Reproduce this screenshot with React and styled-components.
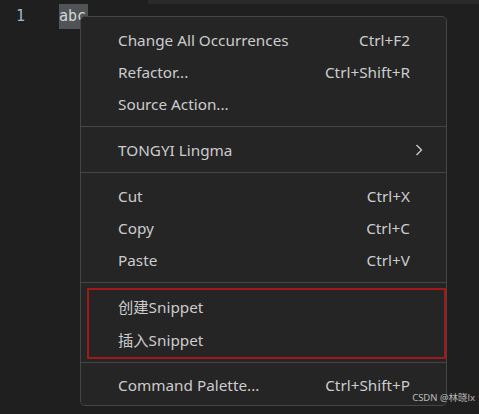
import styled, { createGlobalStyle } from "styled-components";

const Global = createGlobalStyle`
    html, body {
        margin: 0;
        background: #1f1f1f;
        height: 100%;
        overflow: hidden;
    }
    #root {
        height: 100%;
    }
`;

const Editor = styled.div`
    position: relative;
    height: 414px;
    width: 479px;
    background: #1f1f1f;
    font-family: "Noto Sans", "Noto Sans CJK SC", sans-serif;
`;

const TopStrip = styled.div`
    margin-left: 148px;
    height: 4px;
    background: #2a2a2a;
`;

const CodeLine = styled.div`
    display: flex;
    align-items: center;
    height: 24px;
    font-family: "DejaVu Sans Mono", monospace;
    font-size: 15px;
`;

const LineNumber = styled.span`
    width: 59px;
    padding-left: 16px;
    box-sizing: border-box;
    color: #a8b4c4;
`;

const Selected = styled.span`
    background: #515457;
    color: #d4d4d4;
    padding: 3px 0 4px;
    width: 29px;
    overflow: hidden;
`;

const Menu = styled.div`
    position: absolute;
    left: 80px;
    top: 16px;
    width: 367px;
    height: 390px;
    box-sizing: border-box;
    background: #252526;
    border: 1px solid #454545;
    border-radius: 5px;
    padding: 7px 0 3px;
    display: flex;
    flex-direction: column;
    font-size: 15.3px;
    color: #cccccc;
`;

const Item = styled.div`
    display: flex;
    align-items: center;
    justify-content: space-between;
    height: ${(p) => p.$h || 32}px;
    padding: 0 36px 0 37px;
`;

const Key = styled.span`
    color: #cccccc;
`;

const Chevron = styled.svg`
    margin-right: -13px;
`;

const Separator = styled.div`
    height: 1px;
    background: #454545;
    margin: ${(p) => p.$m || "6px 0 7px"};
`;

const Highlight = styled.div`
    position: absolute;
    left: 6px;
    top: 271px;
    width: 359px;
    height: 71px;
    box-sizing: border-box;
    border: 2px solid #a11a1a;
    border-radius: 1px;
`;

const Watermark = styled.div`
    position: absolute;
    right: 4px;
    bottom: 10px;
    font-family: "Noto Sans", "Noto Sans CJK SC", sans-serif;
    font-size: 9.5px;
    color: rgba(235, 235, 235, 0.75);
`;

const App = () => {
    return (
        <Editor>
            <Global />
            <TopStrip />
            <CodeLine>
                <LineNumber>1</LineNumber>
                <Selected>abc</Selected>
            </CodeLine>
            <Menu>
                <Item>
                    <span>Change All Occurrences</span>
                    <Key>Ctrl+F2</Key>
                </Item>
                <Item>
                    <span>Refactor...</span>
                    <Key>Ctrl+Shift+R</Key>
                </Item>
                <Item>
                    <span>Source Action...</span>
                </Item>
                <Separator />
                <Item>
                    <span>TONGYI Lingma</span>
                    <Chevron width="8" height="12" viewBox="0 0 8 12">
                        <path d="M1.5 1 L6.5 6 L1.5 11" fill="none" stroke="#c8c8c8" strokeWidth="1.4" />
                    </Chevron>
                </Item>
                <Separator />
                <Item>
                    <span>Cut</span>
                    <Key>Ctrl+X</Key>
                </Item>
                <Item>
                    <span>Copy</span>
                    <Key>Ctrl+C</Key>
                </Item>
                <Item>
                    <span>Paste</span>
                    <Key>Ctrl+V</Key>
                </Item>
                <Separator $m="6px 0 6px" />
                <Item $h={33}>
                    <span>创建Snippet</span>
                </Item>
                <Item $h={33}>
                    <span>插入Snippet</span>
                </Item>
                <Separator $m="7px 0 6px" />
                <Item>
                    <span>Command Palette...</span>
                    <Key>Ctrl+Shift+P</Key>
                </Item>
                <Highlight />
            </Menu>
            <Watermark>CSDN @林晓lx</Watermark>
        </Editor>
    );
};

export default App;
